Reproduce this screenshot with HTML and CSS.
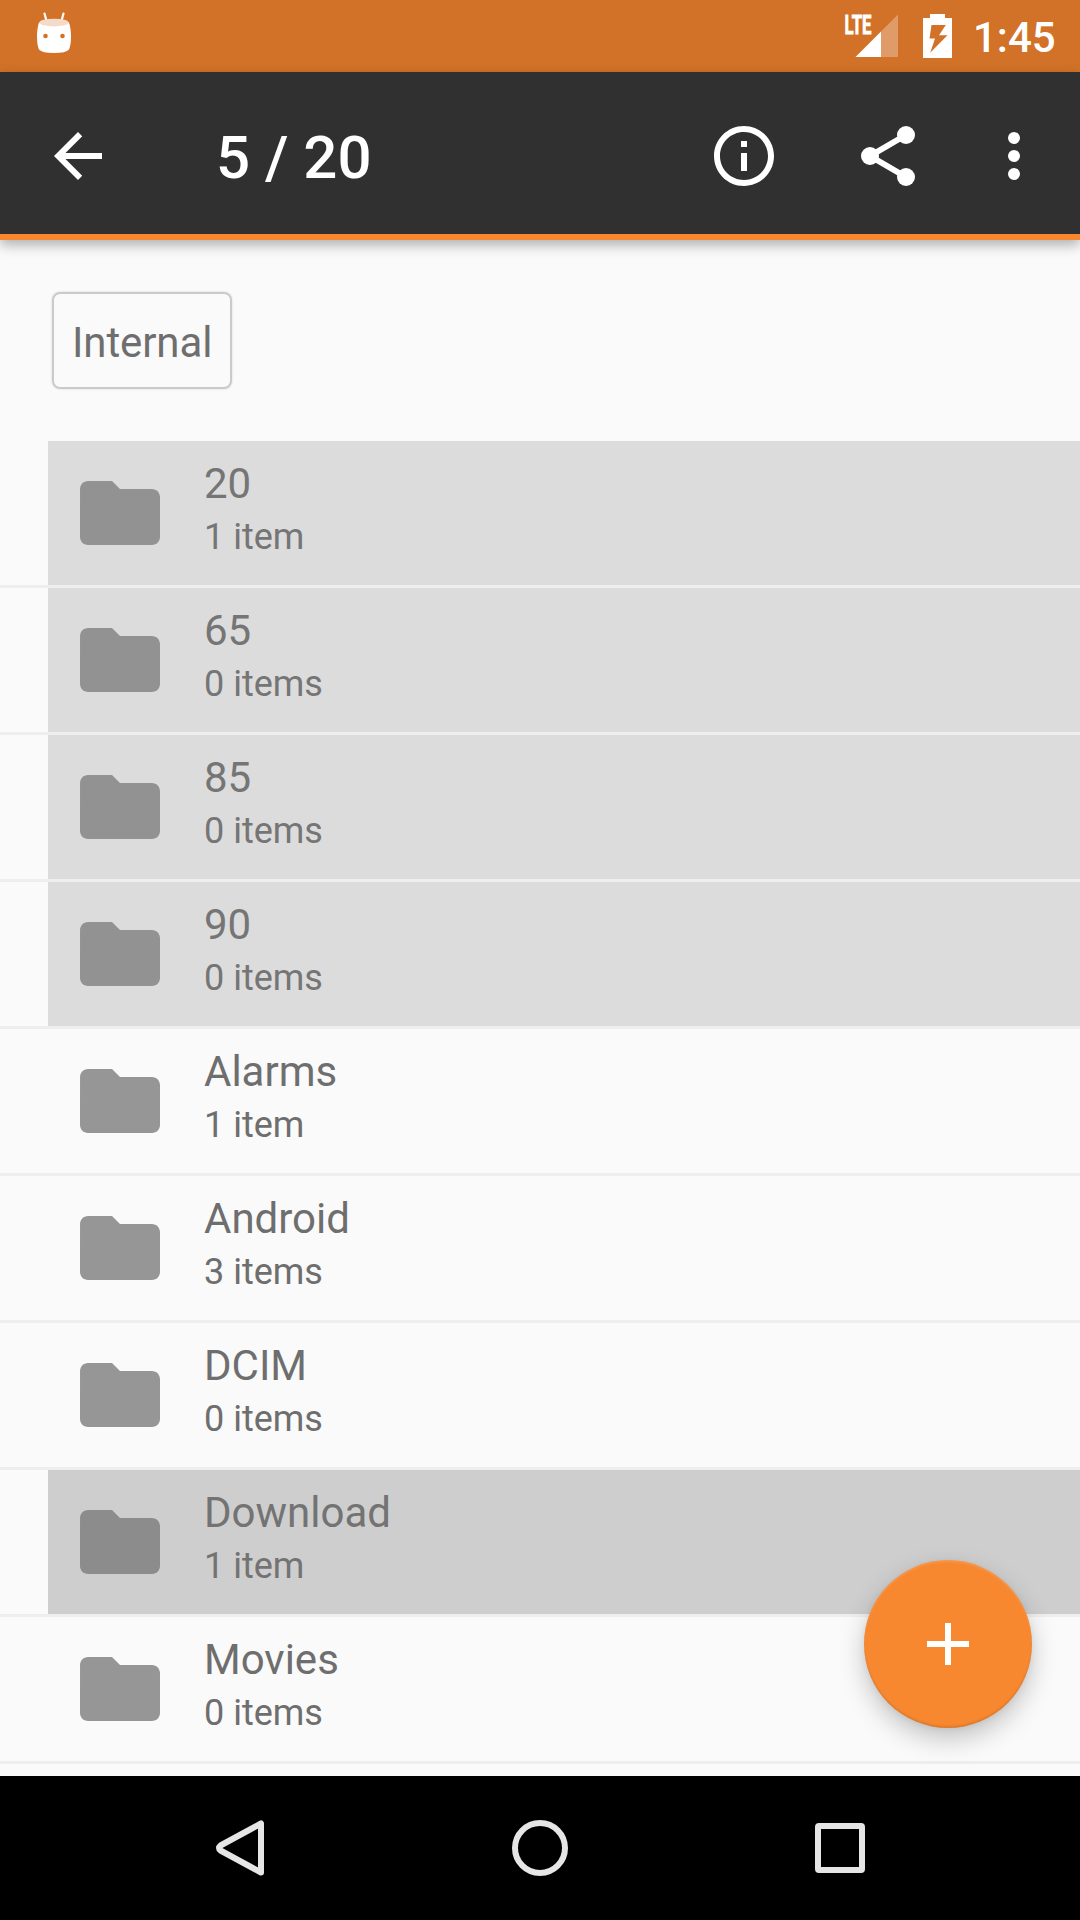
FILE: index.html
```html
<!DOCTYPE html>
<html lang="en">
<head>
<meta charset="utf-8">
<title>Internal</title>
<link rel="stylesheet" href="styles.css">
</head>
<body>
<svg class="defs" aria-hidden="true">
  <symbol id="folder" viewBox="0 0 24 24"><path d="M10 4H4c-1.100 0-1.990.9-1.990 2L2 18c0 1.100.9 2 2 2h16c1.100 0 2-.9 2-2V8c0-1.100-.9-2-2-2h-8l-2-2z"/></symbol>
</svg>
<div class="screen">
  <header class="status">
    <svg class="robot" viewBox="0 0 72 72" width="72" height="72">
      <path d="M44.500 13.500l2 7.500M63.500 13.500l-2 7.500" stroke="#fff" stroke-width="2.200" stroke-linecap="round"/>
      <path d="M39 22.500Q37 28 37 37Q37 45 39 49.500Q42 53 54 53Q66 53 69 49.500Q71 45 71 37Q71 28 69 22.500Z" fill="#fff"/>
      <ellipse cx="54" cy="22.600" rx="14.700" ry="3.900" fill="#f4dac8"/>
      <circle cx="45.500" cy="36" r="2.300" fill="#d27228"/><circle cx="62.500" cy="36" r="2.300" fill="#d27228"/>
    </svg>
    <div class="status-right">
      <svg class="signal" viewBox="0 0 60 44" width="60" height="44">
        <text class="lte" x="6.500" y="19.500" textLength="27" lengthAdjust="spacingAndGlyphs">LTE</text>
        <path d="M60 .5V43H43V17.500z" fill="#fff" fill-opacity=".3"/>
        <path d="M43 17.500V43H17.500z" fill="#fff"/>
      </svg>
      <svg class="battery" viewBox="0 0 29 44" width="29" height="44">
        <path fill="#fff" fill-rule="evenodd" d="M7 0H22V4H29V44H0V4H7zM8.500 11L6.500 24.500H12L7.200 38.800L24.500 21.200H16L22.800 11z"/>
      </svg>
      <span class="clock">1:45</span>
    </div>
  </header>
  <div class="toolbar">
    <svg class="icon" viewBox="0 0 24 24"><path d="M20 11H7.830l5.590-5.590L12 4l-8 8 8 8 1.410-1.410L7.830 13H20v-2z"/></svg>
    <h1 class="count">5 / 20</h1>
    <svg class="icon info" viewBox="0 0 24 24"><path d="M11 17h2v-6h-2v6zm1-15C6.480 2 2 6.480 2 12s4.480 10 10 10 10-4.480 10-10S17.520 2 12 2zm0 18c-4.410 0-8-3.590-8-8s3.590-8 8-8 8 3.590 8 8-3.590 8-8 8zM11 9h2V7h-2v2z"/></svg>
    <svg class="icon share" viewBox="0 0 24 24"><path d="M18 5L6 12L18 19" fill="none" stroke="#fff" stroke-width="2"/><circle cx="18" cy="5" r="3"/><circle cx="6" cy="12" r="3"/><circle cx="18" cy="19" r="3"/></svg>
    <svg class="icon more" viewBox="0 0 24 24"><circle cx="12" cy="6" r="2"/><circle cx="12" cy="12" r="2"/><circle cx="12" cy="18" r="2"/></svg>
  </div>
  <main class="content">
    <nav class="crumbs"><span class="crumb">Internal</span></nav>
    <ul class="list">
      <li class="row selected"><svg class="folder"><use href="#folder"/></svg><div class="label"><span class="name">20</span><span class="sub">1 item</span></div></li>
      <li class="row selected"><svg class="folder"><use href="#folder"/></svg><div class="label"><span class="name">65</span><span class="sub">0 items</span></div></li>
      <li class="row selected"><svg class="folder"><use href="#folder"/></svg><div class="label"><span class="name">85</span><span class="sub">0 items</span></div></li>
      <li class="row selected"><svg class="folder"><use href="#folder"/></svg><div class="label"><span class="name">90</span><span class="sub">0 items</span></div></li>
      <li class="row"><svg class="folder"><use href="#folder"/></svg><div class="label"><span class="name">Alarms</span><span class="sub">1 item</span></div></li>
      <li class="row"><svg class="folder"><use href="#folder"/></svg><div class="label"><span class="name">Android</span><span class="sub">3 items</span></div></li>
      <li class="row"><svg class="folder"><use href="#folder"/></svg><div class="label"><span class="name">DCIM</span><span class="sub">0 items</span></div></li>
      <li class="row selected pressed"><svg class="folder"><use href="#folder"/></svg><div class="label"><span class="name">Download</span><span class="sub">1 item</span></div></li>
      <li class="row"><svg class="folder"><use href="#folder"/></svg><div class="label"><span class="name">Movies</span><span class="sub">0 items</span></div></li>
    </ul>
    <button class="fab" aria-label="Add"><svg class="icon" viewBox="0 0 24 24"><path d="M19 13h-6v6h-2v-6H5v-2h6V5h2v6h6z"/></svg></button>
  </main>
  <footer class="navbar">
    <svg viewBox="0 0 60 60"><path d="M51 5.500V54.500L10.500 32.500Q7.500 30 10.500 27.500Z"/></svg>
    <svg viewBox="0 0 60 60"><circle cx="30" cy="30" r="25"/></svg>
    <svg viewBox="0 0 60 60"><rect x="8" y="8" width="44" height="44" rx="1"/></svg>
  </footer>
</div>
</body>
</html>
```
FILE: styles.css
```css
* { box-sizing: border-box; }
body { margin: 0; font-family: Roboto, "Noto Sans", sans-serif; }
.defs { display: none; }
.screen { width: 1080px; height: 1920px; display: flex; flex-direction: column; overflow: hidden; background: #fafafa; }

.status { height: 72px; flex: none; background: #d27228; display: flex; justify-content: space-between; }
.status-right { display: flex; align-items: flex-start; padding: 14px 24px 0 0; }
.signal { overflow: visible; }
.lte { font: 700 26px Roboto, sans-serif; fill: #fff; stroke: #fff; stroke-width: .8px; }
.battery { margin: 0 21px 0 25px; }
.clock { width: 83px; color: #fff; font-size: 42px; font-weight: 500; line-height: 48px; white-space: nowrap; }

.toolbar { height: 168px; flex: none; display: flex; align-items: center; padding: 6px 30px 0 42px; background: #303030; border-bottom: 6px solid #f88830; box-shadow: 0 5px 12px rgba(0, 0, 0, .3); position: relative; }
.icon { width: 72px; height: 72px; flex: none; fill: #fff; }
.count { flex: 1; margin: 3px 0 0 102px; color: #fff; font-size: 60px; font-weight: 500; line-height: 70px; }
.share { margin: 0 54px 0 72px; }

.content { flex: 1; min-height: 0; position: relative; }
.crumbs { height: 201px; padding: 52px 0 0 52px; }
.crumb { display: block; width: 180px; height: 97px; border: 2px solid #cacaca; border-radius: 8px; padding: 24px 0 0 18px; box-shadow: 0 0 2px rgba(0, 0, 0, .18); color: #6e6e6e; font-size: 42px; line-height: 50px; letter-spacing: -.1px; }

.list { margin: 0; padding: 0; list-style: none; }
.row { height: 147px; border-bottom: 3px solid #eee; padding: 0 0 0 72px; display: flex; gap: 36px; color: #6e6e6e; }
.selected { background: linear-gradient(#dcdcdc, #dcdcdc) 48px 0 no-repeat padding-box; color: #757575; }
.pressed { background-image: linear-gradient(#cecece, #cecece); color: #737373; }
.folder { width: 96px; height: 96px; flex: none; margin-top: 24px; fill: #969696; }
.selected .folder { fill: #929292; }
.pressed .folder { fill: #8c8c8c; }
.label { display: flex; flex-direction: column; gap: 7px; padding-top: 18px; }
.name { font-size: 42px; line-height: 50px; }
.sub { font-size: 36px; line-height: 42px; }

.fab { position: absolute; right: 48px; bottom: 48px; width: 168px; height: 168px; padding: 0; border: 0; border-radius: 50%; background: #f78830; display: grid; place-items: center; box-shadow: 0 11px 26px rgba(0, 0, 0, .22), 0 2px 6px rgba(0, 0, 0, .06), inset 0 -2px 2px rgba(0, 0, 0, .1), inset 0 2px 2px rgba(255, 255, 255, .12); }

.navbar { height: 144px; flex: none; background: #000; display: flex; justify-content: center; align-items: center; gap: 240px; }
.navbar svg { width: 60px; height: 60px; fill: none; stroke: #e6e6e6; stroke-width: 6; stroke-linejoin: round; }
```
